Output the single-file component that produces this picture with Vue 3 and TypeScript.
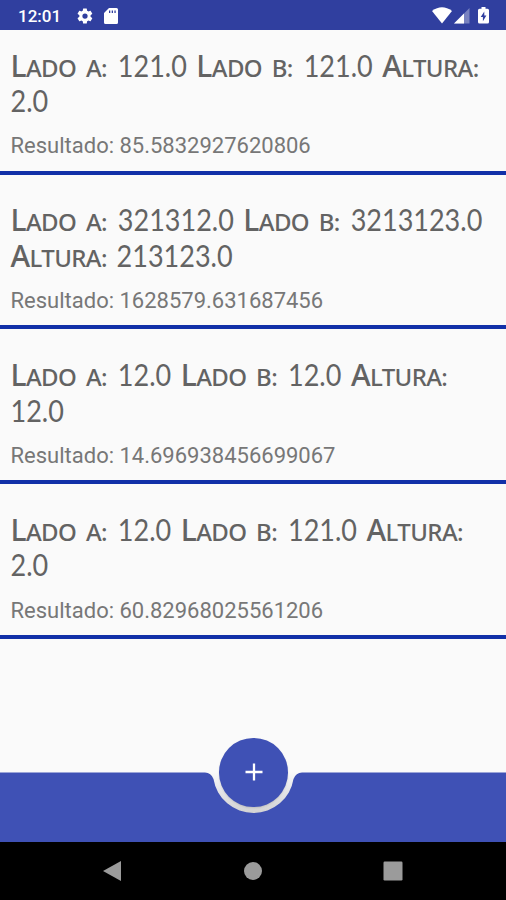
<script setup lang="ts">
interface Word {
  text: string
  kind: 'word' | 'single' | 'number'
}

interface Calculation {
  lines: string[]
  result: string
}

const calculations: Calculation[] = [
  { lines: ['Lado a: 121.0 Lado b: 121.0 Altura:', '2.0'], result: '85.5832927620806' },
  { lines: ['Lado a: 321312.0 Lado b: 3213123.0', 'Altura: 213123.0'], result: '1628579.631687456' },
  { lines: ['Lado a: 12.0 Lado b: 12.0 Altura:', '12.0'], result: '14.696938456699067' },
  { lines: ['Lado a: 12.0 Lado b: 121.0 Altura:', '2.0'], result: '60.82968025561206' },
]

function words(line: string): Word[] {
  return line.split(' ').map((text) => ({
    text,
    kind: /^\d/.test(text) ? 'number' : text.length > 2 ? 'word' : 'single',
  }))
}
</script>

<template>
  <div class="screen">
    <header class="status">
      <span class="clock">12:01</span>
      <svg class="gear" viewBox="0 0 24 24"><path fill-rule="evenodd" d="M19.4 13a7.8 7.8 0 0 0 0-2l2.1-1.7c.2-.1.2-.4.1-.6l-2-3.5c-.1-.2-.4-.3-.6-.2l-2.5 1a7 7 0 0 0-1.7-1L14.4 2.4a.5.5 0 0 0-.5-.4h-4a.5.5 0 0 0-.5.4L9 5a7 7 0 0 0-1.7 1l-2.5-1c-.2-.1-.5 0-.6.2l-2 3.5c-.1.2-.1.5.1.6L4.5 11a7.8 7.8 0 0 0 0 2l-2.2 1.7c-.2.1-.2.4-.1.6l2 3.5c.1.2.4.3.6.2l2.5-1a7 7 0 0 0 1.7 1l.4 2.6c0 .2.2.4.5.4h4c.2 0 .5-.2.5-.4l.4-2.6a7 7 0 0 0 1.7-1l2.5 1c.2.1.5 0 .6-.2l2-3.5c.1-.2.1-.5-.1-.6zM12 15.500a3.500 3.500 0 1 1 0-7 3.500 3.500 0 0 1 0 7z" /></svg>
      <svg class="card" viewBox="0 0 14 16"><path fill-rule="evenodd" d="M5 0h7.500Q14 0 14 1.500v13q0 1.500-1.500 1.500h-11Q0 16 0 14.500V5zM5 2.500v2.500h1.300v-2.500zM7.700 2.500v2.500H9v-2.500zM10.400 2.500v2.500h1.300v-2.500z" /></svg>
      <svg class="signals" viewBox="0 0 58 18">
        <path d="M0 4Q10-3.500 20 4L10 16.500z" />
        <path d="M37.500 1v15.500H22z" opacity=".35" />
        <path d="M32 6.500v10H22z" />
        <path fill-rule="evenodd" d="M49.500 0h4v1.800h2q1.500 0 1.500 1.500v11.800q0 1.500-1.500 1.500h-8q-1.500 0-1.500-1.500V3.300q0-1.500 1.500-1.500h2zM52.300 4.500L48.700 10h2.200v4.200l3.500-5.700h-2.100z" />
      </svg>
    </header>

    <main class="list">
      <article v-for="item in calculations" :key="item.result" class="item">
        <h2 class="title">
          <span v-for="line in item.lines" :key="line" class="line">
            <span v-for="(word, i) in words(line)" :key="i" :class="word.kind">{{ word.text }}</span>
          </span>
        </h2>
        <p class="result">Resultado: {{ item.result }}</p>
      </article>
    </main>

    <footer class="bar">
      <svg class="surface" viewBox="0 0 506 70">
        <defs>
          <linearGradient id="shade" x1="0" y1="0" x2="0" y2="1">
            <stop offset="0" stop-color="#fafafa" />
            <stop offset=".45" stop-color="#e5e5e8" />
            <stop offset="1" stop-color="#d2d2d2" />
          </linearGradient>
        </defs>
        <rect x="206" width="96" height="42" fill="url(#shade)" />
        <path fill="#3f51b5" d="M0 .5H205Q211 .5 213.500 7A40.500 40.300 0 0 0 293.500 7Q296 .5 302 .5H506V70H0z" />
      </svg>
      <button class="fab" aria-label="+">
        <svg viewBox="0 0 18 18"><path d="M9 .5v17M.5 9h17" /></svg>
      </button>
    </footer>

    <nav class="navigation">
      <svg viewBox="0 0 20 22"><path d="M19 1v20L1 11z" /></svg>
      <svg viewBox="0 0 20 22"><circle cx="10" cy="11" r="9" /></svg>
      <svg viewBox="0 0 20 22"><rect x=".5" y="1.500" width="19" height="19" rx="1.200" /></svg>
    </nav>
  </div>
</template>

<style>
body {
  margin: 0;
}
</style>

<style scoped>
.screen {
  width: 506px;
  height: 900px;
  display: flex;
  flex-direction: column;
  overflow: hidden;
  background: #fafafa;
  font-family: Roboto, sans-serif;
}
.status {
  box-sizing: border-box;
  height: 29.5px;
  flex: none;
  display: flex;
  align-items: center;
  padding: 2px 16px 0 18px;
  background: #303f9f;
  color: #fff;
}
.status svg {
  fill: #fff;
}
.clock {
  width: 58px;
  font-size: 17px;
  font-weight: 500;
}
.gear {
  width: 18px;
  height: 18px;
}
.card {
  width: 14px;
  height: 16px;
  margin-left: 10px;
}
.signals {
  width: 58px;
  height: 18px;
  margin-left: auto;
}
.list {
  flex: 1;
  display: flex;
  flex-direction: column;
  gap: 9.7px;
}
.item {
  box-sizing: border-box;
  height: 145px;
  flex: none;
  padding: 19.3px 0 0 10.5px;
  border-bottom: 4px solid #1230a8;
}
.title {
  margin: 0;
  color: #636363;
  font-family: "Noto Sans", sans-serif;
  font-size: 30px;
  font-weight: 400;
}
.line {
  display: flex;
  align-items: baseline;
  height: 35.5px;
  line-height: 35.5px;
  white-space: nowrap;
}
.word,
.single {
  display: block;
  font-size: 24px;
  font-weight: 500;
  line-height: 30px;
  letter-spacing: -0.6px;
  text-transform: uppercase;
}
.word {
  margin-right: 9.7px;
}
.word::first-letter {
  font-size: 30px;
  font-weight: 500;
  line-height: 30px;
}
.single {
  margin-right: 10.9px;
}
/* Narrow figures: a smaller size stretched upwards from the baseline. */
.number {
  display: block;
  margin-right: 9.5px;
  font-family: Lato, sans-serif;
  font-size: 27px;
  transform: translateY(0.5px) scaleY(1.11);
  transform-origin: 0 28.2px;
}
.result {
  margin: 11.7px 0 0;
  color: #777;
  font-size: 22px;
  line-height: 30px;
}
.bar {
  position: relative;
  height: 70px;
  flex: none;
}
.surface {
  display: block;
  width: 506px;
  height: 70px;
}
.fab {
  position: absolute;
  top: -33.8px;
  left: 219.3px;
  width: 68.5px;
  height: 68.5px;
  display: grid;
  place-items: center;
  padding: 0;
  border: 0;
  border-radius: 50%;
  background: #3f51b5;
  box-shadow: 0 1px 2px rgba(0, 0, 0, 0.12);
}
.fab svg {
  width: 18px;
  height: 18px;
  stroke: #fff;
  stroke-width: 2.3;
}
.navigation {
  box-sizing: border-box;
  height: 58px;
  flex: none;
  display: flex;
  align-items: center;
  justify-content: space-between;
  padding: 0 103px 0 102px;
  background: #000;
}
.navigation svg {
  width: 20px;
  height: 22px;
  fill: #9b9b9b;
}
</style>
